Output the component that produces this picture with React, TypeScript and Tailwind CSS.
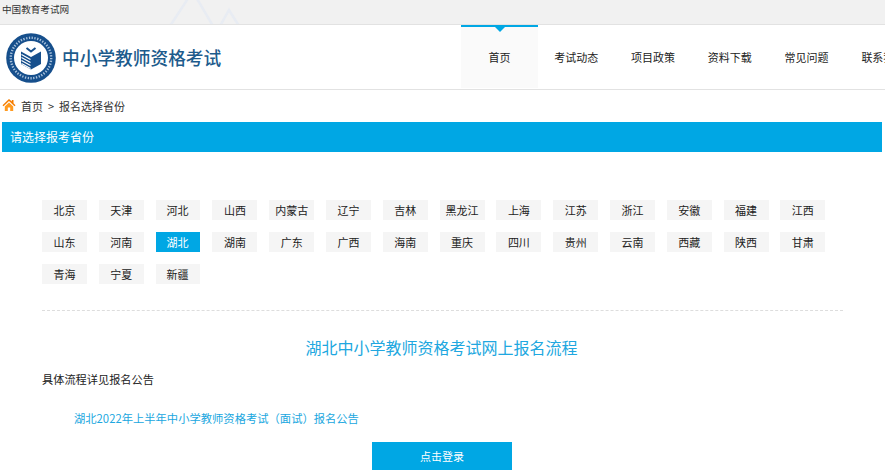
const rows = ["北京","天津","河北","山西","内蒙古","辽宁","吉林","黑龙江","上海","江苏","浙江","安徽","福建","江西","山东","河南","湖北","湖南","广东","广西","海南","重庆","四川","贵州","云南","西藏","陕西","甘肃","青海","宁夏","新疆"];
const nav = ["首页","考试动态","项目政策","资料下载","常见问题","联系我们"];

function Logo() {
  return (
    <svg width="50" height="50" viewBox="0 0 50 50" className="shrink-0">
      <circle cx="25" cy="25" r="24.8" fill="#164f8c" />
      <circle cx="25" cy="25" r="20.2" fill="none" stroke="#a9c2dc" strokeWidth="2.4" strokeDasharray="1.3 1.5" />
      <circle cx="25" cy="25" r="17" fill="#ffffff" />
      <path d="M15 18.500l10 5.500 10-5.500V31l-10 5.500L15 31z" fill="#164f8c" />
      <path d="M20.500 15l4.500 3.500 4.500-3.500" fill="none" stroke="#164f8c" strokeWidth="2" />
      <path d="M15.500 21.500l9 5M15.500 24.500l9 5M15.500 27.500l9 5M15.500 30.500l9 5" stroke="#ffffff" strokeWidth="1.200" />
    </svg>
  );
}

export default function App() {
  return (
    <div className="w-[885px] h-[474px] overflow-hidden bg-white text-[12px] text-[#222] font-['Noto_Sans_CJK_SC','Liberation_Sans',sans-serif]">
      <div className="relative h-[25px] bg-[#f1f1f1] border-b border-[#e2e2e2] overflow-hidden">
        <svg className="absolute left-[165px] top-0" width="90" height="24" viewBox="0 0 90 24" fill="none" stroke="#e8ecf3" strokeWidth="2.500">
          <path d="M5 26L24 -3M31 -3L48 26M55 26L64 10 74 26" />
        </svg>
        <div className="relative pl-[2px] text-[9.600px] leading-[18px] text-[#333]">中国教育考试网</div>
      </div>
      <div className="flex h-[65px] border-b border-[#e2e2e2] overflow-hidden">
        <div className="flex w-[461px] shrink-0 items-center pl-[6px] pt-[2px]">
          <Logo />
          <span className="ml-[6px] mb-[2px] text-[17.700px] font-medium text-[#1d5b8c]">中小学教师资格考试</span>
        </div>
        {nav.map((n, i) => (
          <div key={n} className={`relative flex h-[63px] w-[76.800px] shrink-0 items-center justify-center whitespace-nowrap text-[11px] text-[#222] ${i === 0 ? "bg-[#fafafa] border-t-2 border-[#00a7e4]" : ""}`}>
            {i === 0 && <span className="absolute left-[34px] top-0 border-x-[5px] border-t-[5px] border-x-transparent border-t-[#00a7e4]" />}
            <span className={i === 0 ? "" : "pt-[2px]"}>{n}</span>
          </div>
        ))}
      </div>
      <div className="flex h-[32px] items-center pl-[2px] text-[11px] text-[#333]">
        <svg width="14" height="14" viewBox="0 0 14 14" className="mr-[5px] mb-[2px]">
          <path d="M7 1L0.500 7.200l1 1L7 3l5.500 5.200 1-1-2-2V2h-1.700v1.600z" fill="#f57c00" />
          <path d="M2.800 8.400L7 4.500l4.200 3.900V13H8.200V9.500H5.800V13H2.800z" fill="#ff9a1f" />
        </svg>
        <span>首页</span>
        <span className="mx-[5px]">&gt;</span>
        <span>报名选择省份</span>
      </div>
      <div className="mx-[2px] h-[30px] w-[880px] bg-[#00a7e4] pl-[8px] text-[12px] leading-[29px] text-white">请选择报考省份</div>
      <div className="mx-[42px] mt-[48px] flex w-[801px] flex-wrap gap-x-[11.800px] gap-y-[12px] border-b border-dashed border-[#dddddd] pb-[26px]">
        {rows.map((p, i) => (
          <div key={p} className={`h-[20px] text-center text-[11px] leading-[20px] ${i % 14 === 2 ? "w-[44px] mr-[1px]" : "w-[45px]"} ${p === "湖北" ? "bg-[#00a7e4] text-white" : "bg-[#f5f5f5] text-[#222]"}`}>{p}</div>
        ))}
      </div>
      <div className="mt-[25px] mr-[2px] text-center text-[16px] leading-[22px] text-[#20a7e0]">湖北中小学教师资格考试网上报名流程</div>
      <div className="ml-[42px] mt-[11px] text-[11.200px] leading-[20px] text-[#222]">具体流程详见报名公告</div>
      <div className="ml-[74px] mt-[19px] text-[11.300px] leading-[20px] text-[#20a7e0]">湖北2022年上半年中小学教师资格考试（面试）报名公告</div>
      <div className="ml-[372px] mt-[14px] h-[28px] w-[140px] bg-[#00a7e4] text-center text-[11px] leading-[28px] text-white">点击登录</div>
    </div>
  );
}
